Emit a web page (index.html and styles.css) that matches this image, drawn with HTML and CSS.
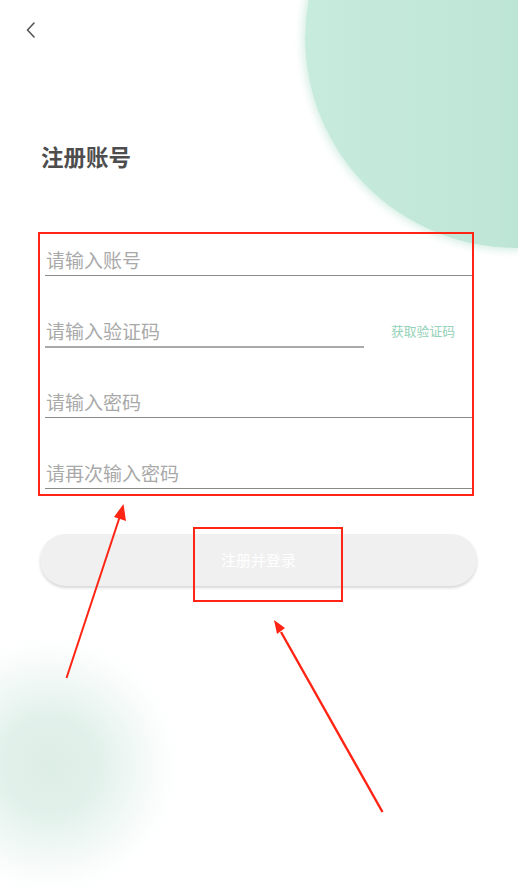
FILE: index.html
```html
<!DOCTYPE html>
<html lang="zh">
<head>
<meta charset="utf-8">
<title>注册账号</title>
<link rel="stylesheet" href="styles.css">
</head>
<body>
<div class="page">
  <div class="blob-top"></div>
  <div class="blob-bottom"></div>

  <div class="content">
    <div class="header">
      <svg class="back" width="10" height="16" viewBox="0 0 10 16">
        <polyline points="8,1 1.5,8 8,15" fill="none" stroke="#555" stroke-width="1.6" stroke-linecap="round" stroke-linejoin="round"/>
      </svg>
    </div>
    <h1 class="title">注册账号</h1>

    <div class="form">
      <div class="field"><span class="ph">请输入账号</span></div>
      <div class="field-row">
        <div class="field code"><span class="ph">请输入验证码</span></div>
        <span class="get-code">获取验证码</span>
      </div>
      <div class="field"><span class="ph">请输入密码</span></div>
      <div class="field"><span class="ph">请再次输入密码</span></div>
    </div>

    <div class="btn">注册并登录</div>
  </div>

  <div class="mark mark-form"></div>
  <div class="mark mark-btn"></div>
  <svg class="arrows" width="518" height="895" viewBox="0 0 518 895">
    <line x1="66.5" y1="678" x2="120" y2="516" stroke="#ff2414" stroke-width="2"/>
    <polygon points="123.5,504 126,521 114,517" fill="#ff2414"/>
    <line x1="382.5" y1="812" x2="281" y2="632" stroke="#ff2414" stroke-width="2.4"/>
    <polygon points="274,620 285,628 277,634" fill="#ff2414"/>
  </svg>
</div>
</body>
</html>
```

FILE: styles.css
```css
html, body {
  margin: 0;
  padding: 0;
  background: #fff;
}
body {
  font-family: "Noto Sans CJK SC", "Noto Sans", sans-serif;
}
.page {
  position: relative;
  width: 518px;
  height: 895px;
  overflow: hidden;
  background: #fff;
}
.blob-top {
  position: absolute;
  left: 305px;
  top: -172px;
  width: 422px;
  height: 420px;
  border-radius: 50%;
  background: linear-gradient(90deg, #c7ebdd 0%, #bfe6d7 45%, #a6d6c5 100%);
  box-shadow: 0 0 8px 2px rgba(190, 228, 214, 0.7);
}
.blob-bottom {
  position: absolute;
  left: -85px;
  top: 630px;
  width: 270px;
  height: 270px;
  background: radial-gradient(circle closest-side at 50% 50%, rgba(221, 238, 231, 1) 0%, rgba(222, 239, 232, 0.9) 35%, rgba(228, 242, 237, 0.5) 65%, rgba(240, 248, 245, 0.15) 88%, rgba(255, 255, 255, 0) 100%);
}
.content {
  position: relative;
}
.header {
  padding: 22px 0 0 26px;
  height: 16px;
}
.back {
  display: block;
}
.title {
  margin: 103px 0 0 41px;
  font-size: 22.5px;
  line-height: 30px;
  font-weight: 700;
  color: #4d4d4d;
}
.form {
  margin: 74px 0 0 45px;
  width: 427px;
  display: flex;
  flex-direction: column;
  gap: 39.5px;
}
.field {
  height: 30px;
  border-bottom: 1.5px solid #8a8a8a;
  display: flex;
  align-items: center;
}
.field-row {
  display: flex;
  align-items: center;
}
.field.code {
  width: 319px;
  border-bottom: 2px solid #a9a9a9;
}
.ph {
  font-size: 19px;
  line-height: 30px;
  color: #a9a9a9;
  margin-left: 1px;
}
.get-code {
  margin-left: 27px;
  margin-top: -2px;
  font-size: 12.8px;
  color: #95d2b8;
  line-height: 30px;
}
.btn {
  margin: 45px 0 0 40px;
  width: 437px;
  height: 52px;
  border-radius: 26px;
  background: #f0f0f0;
  box-shadow: 0 2px 3px rgba(0, 0, 0, 0.16);
  color: #fff;
  font-size: 15px;
  line-height: 52px;
  text-align: center;
}
.mark {
  position: absolute;
  border: 2px solid #ff2414;
  box-sizing: border-box;
}
.mark-form {
  left: 38px;
  top: 232px;
  width: 436px;
  height: 264px;
}
.mark-btn {
  left: 193px;
  top: 527px;
  width: 150px;
  height: 75px;
}
.arrows {
  position: absolute;
  left: 0;
  top: 0;
  pointer-events: none;
}
```
